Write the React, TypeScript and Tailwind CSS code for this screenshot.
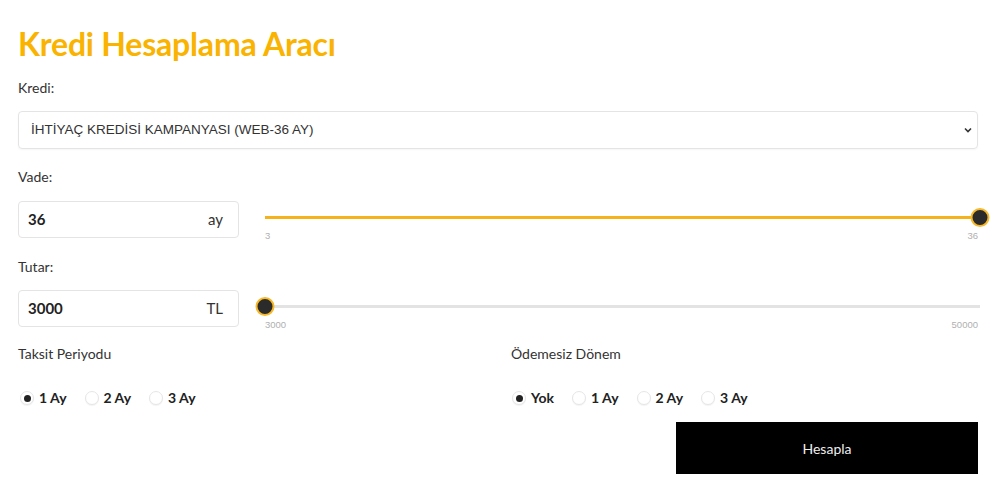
const font = { fontFamily: 'Lato, "Open Sans", sans-serif' };

function Slider({ min, max, value, filled }: { min: number; max: number; value: number; filled: boolean }) {
  const pct = ((value - min) / (max - min)) * 100;
  return (
    <div className="flex flex-1 flex-col pl-[26px] pt-[7px]">
      <div className="relative mr-[-2px] h-[18px]">
        <div className="absolute left-0 right-0 top-[8px] h-[3px] bg-[#e3e3e3]" />
        {filled && <div className="absolute left-0 top-[8px] h-[3px] bg-[#f5b21a]" style={{ width: `${pct}%` }} />}
        <div
          className="absolute top-0 h-[19px] w-[19px] -translate-x-1/2 rounded-full border-2 border-[#f7b92a] bg-[#2b2b2b]"
          style={{ left: `${pct}%` }}
        />
      </div>
      <div className="mt-[4px] flex justify-between font-['Liberation_Sans',sans-serif] text-[9.5px] leading-[11px] text-[#b0b0b0]">
        <span>{min}</span>
        <span>{max}</span>
      </div>
    </div>
  );
}

function Radio({ label, checked }: { label: string; checked?: boolean }) {
  return (
    <label className="flex items-center gap-[5px] text-[14px] font-bold leading-[18px] text-[#222]">
      <span className="flex h-[14px] w-[14px] items-center justify-center rounded-full border border-[#e6e6e6] bg-white shadow-[0_1px_1px_rgba(0,0,0,0.05)]">
        {checked && <span className="h-[7px] w-[7px] rounded-full bg-[#222]" />}
      </span>
      {label}
    </label>
  );
}

export default function App() {
  return (
    <div className="min-h-[498px] bg-white px-[18px] pt-[22px] text-[#333]" style={font}>
      <h1 className="text-[32px] font-bold leading-[44px] tracking-[-0.2px] text-[#f9b300]">Kredi Hesaplama Aracı</h1>

      <p className="mt-[13px] text-[14px] leading-[18px]">Kredi:</p>
      <div className="mt-[14px] flex h-[38px] w-[960px] items-center justify-between rounded-[4px] border border-[#e4e4e4] pl-[12px] pr-[4px] font-['Liberation_Sans',sans-serif] text-[13.5px] text-[#333] shadow-[0_1px_2px_rgba(0,0,0,0.04)]">
        <span>İHTİYAÇ KREDİSİ KAMPANYASI (WEB-36 AY)</span>
        <svg width="10" height="10" viewBox="0 0 10 10" fill="none">
          <path d="M2 3.5 5 6.5 8 3.5" stroke="#333" strokeWidth="1.6" />
        </svg>
      </div>

      <p className="mt-[19px] text-[14px] leading-[18px]">Vade:</p>
      <div className="mt-[15px] flex w-[960px] items-start">
        <div className="flex h-[37px] w-[221px] items-center justify-between rounded-[4px] border border-[#e4e4e4] pl-[9px] pr-[15px] text-[15px]">
          <span className="font-bold text-[#222]">36</span>
          <span>ay</span>
        </div>
        <Slider min={3} max={36} value={36} filled />
      </div>

      <p className="mt-[17px] text-[14px] leading-[18px]">Tutar:</p>
      <div className="mt-[14px] flex w-[960px] items-start">
        <div className="flex h-[37px] w-[221px] items-center justify-between rounded-[4px] border border-[#e4e4e4] pl-[9px] pr-[15px] text-[15px]">
          <span className="font-bold text-[#222]">3000</span>
          <span>TL</span>
        </div>
        <Slider min={3000} max={50000} value={3000} filled={false} />
      </div>

      <div className="mt-[15px] grid w-[960px] grid-cols-[493px_1fr]">
        <div>
          <p className="text-[14px] leading-[18px]">Taksit Periyodu</p>
          <div className="mt-[26px] flex gap-[18px] pl-[2px]">
            <Radio label="1 Ay" checked />
            <Radio label="2 Ay" />
            <Radio label="3 Ay" />
          </div>
        </div>
        <div>
          <p className="text-[14px] leading-[18px]">Ödemesiz Dönem</p>
          <div className="mt-[26px] flex gap-[18px] pl-[1px]">
            <Radio label="Yok" checked />
            <Radio label="1 Ay" />
            <Radio label="2 Ay" />
            <Radio label="3 Ay" />
          </div>
          <div className="mt-[15px] flex justify-end">
            <button className="h-[52px] w-[302px] bg-black text-[14px] text-[#eee]">Hesapla</button>
          </div>
        </div>
      </div>
    </div>
  );
}
